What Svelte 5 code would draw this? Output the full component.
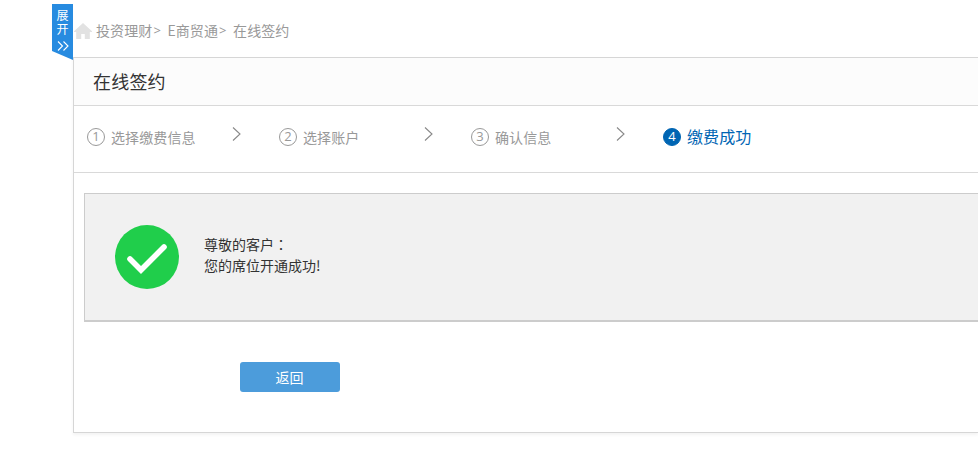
<script lang="ts">
  const crumbs = ['投资理财', 'E商贸通', '在线签约'];
  const steps = ['选择缴费信息', '选择账户', '确认信息', '缴费成功'];

  let current = 3;
  let menuOpen = false;

  function handleBack() {
    current = 0;
  }
</script>

<div class="page">
  <button class="expand-tab" on:click={() => (menuOpen = !menuOpen)}>
    <span class="tab-text">展开</span>
    <svg width="12" height="10" viewBox="0 0 12 10">
      <path d="M1 .5 5.5 5 1 9.5M6.5 .5 11 5 6.5 9.5" fill="none" stroke="#fff" stroke-width="1.1" />
    </svg>
  </button>

  <nav class="breadcrumb">
    <svg class="home" width="18" height="16" viewBox="0 0 18 16">
      <path d="M9 0 18 8.2V9H15.8V16H10.8V11H7.2V16H2.2V9H0V8.2Z" fill="#e2e2e2" />
    </svg>
    {#each crumbs as crumb, i}
      <span class="crumb">{crumb}</span>
      {#if i < crumbs.length - 1}
        <span class="sep">&gt;</span>
      {/if}
    {/each}
  </nav>

  <main class="panel">
    <h1>在线签约</h1>

    <ol class="steps">
      {#each steps as step, i}
        <li class:active={i === current}>
          <span class="num">{i + 1}</span>
          <span class="label">{step}</span>
          {#if i < steps.length - 1}
            <svg class="arrow" width="10" height="14" viewBox="0 0 10 14">
              <path d="M1 .5 8 7 1 13.5" fill="none" stroke="#888" stroke-width="1.1" />
            </svg>
          {/if}
        </li>
      {/each}
    </ol>

    <section class="result">
      <svg width="64" height="64" viewBox="0 0 64 64">
        <circle cx="32" cy="32" r="32" fill="#20ce4b" />
        <path d="M15 34 26 45 49 22" fill="none" stroke="#fff" stroke-width="5.6" stroke-linecap="round" />
      </svg>
      <div class="message">
        <p>尊敬的客户<span class="colon">：</span></p>
        <p>您的席位开通成功!</p>
      </div>
    </section>

    <button class="btn-back" on:click={handleBack}>返回</button>
  </main>
</div>

<style>
  :global(body) {
    margin: 0;
    background: #fff;
    overflow: hidden;
  }

  .page {
    position: relative;
    box-sizing: border-box;
    height: 459px;
    padding-left: 73px;
    font-family: 'Noto Sans CJK SC', sans-serif;
    font-size: 14px;
    color: #333;
  }

  button {
    border: 0;
    font-family: inherit;
    color: #fff;
    cursor: pointer;
  }

  .expand-tab {
    position: absolute;
    left: 52px;
    top: 4px;
    display: flex;
    flex-direction: column;
    align-items: center;
    width: 21px;
    height: 56px;
    padding: 4px 0 0;
    background: #278be0;
    font-size: 12px;
    line-height: 14px;
    clip-path: polygon(0 0, 100% 0, 100% 100%, 0 84%);
  }

  .tab-text {
    width: 12px;
  }

  .expand-tab svg {
    margin-top: 5px;
  }

  .breadcrumb {
    display: flex;
    align-items: center;
    height: 57px;
    padding: 3px 0 0 1px;
    box-sizing: border-box;
    color: #999;
  }

  .home {
    margin: 2px 4px 0 0;
  }

  .crumb {
    letter-spacing: 0.1px;
  }

  .sep {
    width: 15px;
    font-family: 'Noto Sans', sans-serif;
    font-size: 13px;
    text-indent: 1px;
  }

  .panel {
    box-sizing: border-box;
    height: 376px;
    border: 1px solid #d6d6d6;
    border-right: 0;
    box-shadow: 0 2px 3px rgba(0, 0, 0, 0.05);
  }

  h1 {
    height: 47px;
    margin: 0;
    padding-left: 19px;
    border-bottom: 1px solid #d9d9d9;
    background: #fcfcfc;
    font-size: 18px;
    font-weight: 400;
    letter-spacing: 0.2px;
    line-height: 46px;
  }

  .steps {
    display: flex;
    height: 66px;
    margin: 0;
    padding: 0 0 0 13px;
    border-bottom: 1px solid #d9d9d9;
    list-style: none;
  }

  li {
    display: flex;
    align-items: center;
    width: 192px;
    height: 62px;
    color: #999;
  }

  .num {
    box-sizing: border-box;
    width: 18px;
    height: 18px;
    margin-right: 6px;
    border: 1px solid #999;
    border-radius: 50%;
    font-family: 'Open Sans', sans-serif;
    font-size: 13px;
    line-height: 15px;
    text-align: center;
  }

  .label {
    padding-bottom: 1px;
    letter-spacing: 0.1px;
  }

  .arrow {
    margin: 0 37px 6px auto;
  }

  .active {
    color: #0065b3;
    font-size: 16px;
  }

  .active .num {
    border-color: #0065b3;
    background: #0065b3;
    color: #fff;
  }

  .active .label {
    padding-bottom: 2px;
  }

  .result {
    display: flex;
    align-items: center;
    box-sizing: border-box;
    height: 129px;
    margin: 20px 0 40px 10px;
    padding-left: 30px;
    border: 1px solid #ccc;
    border-width: 1px 0 2px 1px;
    background: #f1f1f1;
  }

  .message {
    margin: -5px 0 0 25px;
  }

  .colon {
    font-family: 'Noto Sans CJK TC', sans-serif;
  }

  p {
    margin: 0;
    line-height: 21px;
  }

  .btn-back {
    display: block;
    width: 100px;
    height: 30px;
    margin-left: 166px;
    padding: 0 1px 0 0;
    border-radius: 3px;
    background: #4c9cdb;
    font-size: 14px;
    line-height: 28px;
  }
</style>
